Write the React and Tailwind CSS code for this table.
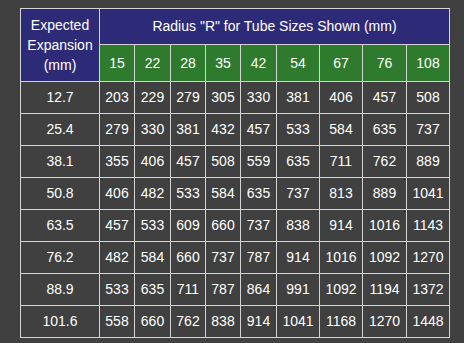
import React from "react";

const SIZES = ["15", "22", "28", "35", "42", "54", "67", "76", "108"];
const WIDTHS = ["w-[79px]", "w-[35px]", "w-[36px]", "w-[35px]", "w-[35px]", "w-[36px]", "w-[43px]", "w-[43px]", "w-[44px]", "w-[43px]"];

const ROWS = [
  ["12.7", 203, 229, 279, 305, 330, 381, 406, 457, 508],
  ["25.4", 279, 330, 381, 432, 457, 533, 584, 635, 737],
  ["38.1", 355, 406, 457, 508, 559, 635, 711, 762, 889],
  ["50.8", 406, 482, 533, 584, 635, 737, 813, 889, 1041],
  ["63.5", 457, 533, 609, 660, 737, 838, 914, 1016, 1143],
  ["76.2", 482, 584, 660, 737, 787, 914, 1016, 1092, 1270],
  ["88.9", 533, 635, 711, 787, 864, 991, 1092, 1194, 1372],
  ["101.6", 558, 660, 762, 838, 914, 1041, 1168, 1270, 1448],
];

export default function App() {
  return (
    <div className="w-[464px] h-[343px] bg-[#404040] pt-[8px] pl-[20px] font-['Liberation_Sans',Arial,sans-serif] text-[14px] text-white">
      <table className="table-fixed border-collapse w-[430px] text-center">
        <colgroup>
          {WIDTHS.map((w, i) => (
            <col key={i} className={w} />
          ))}
        </colgroup>
        <thead>
          <tr className="h-[36px]">
            <th
              rowSpan={2}
              className="border border-[#d4d4d4] bg-[#2d2b78] font-normal leading-[20px] p-0"
            >
              Expected
              <br />
              Expansion
              <br />
              (mm)
            </th>
            <th colSpan={9} className="border border-[#d4d4d4] bg-[#2d2b78] font-normal p-0">
              Radius "R" for Tube Sizes Shown (mm)
            </th>
          </tr>
          <tr className="h-[37px]">
            {SIZES.map((s) => (
              <th key={s} className="border border-[#d4d4d4] bg-[#2e7b2e] font-normal p-0">
                {s}
              </th>
            ))}
          </tr>
        </thead>
        <tbody>
          {ROWS.map((r) => (
            <tr key={r[0]} className="h-[32px]">
              {r.map((v, i) => (
                <td key={i} className="border border-[#d4d4d4] p-0">
                  {v}
                </td>
              ))}
            </tr>
          ))}
        </tbody>
      </table>
    </div>
  );
}
